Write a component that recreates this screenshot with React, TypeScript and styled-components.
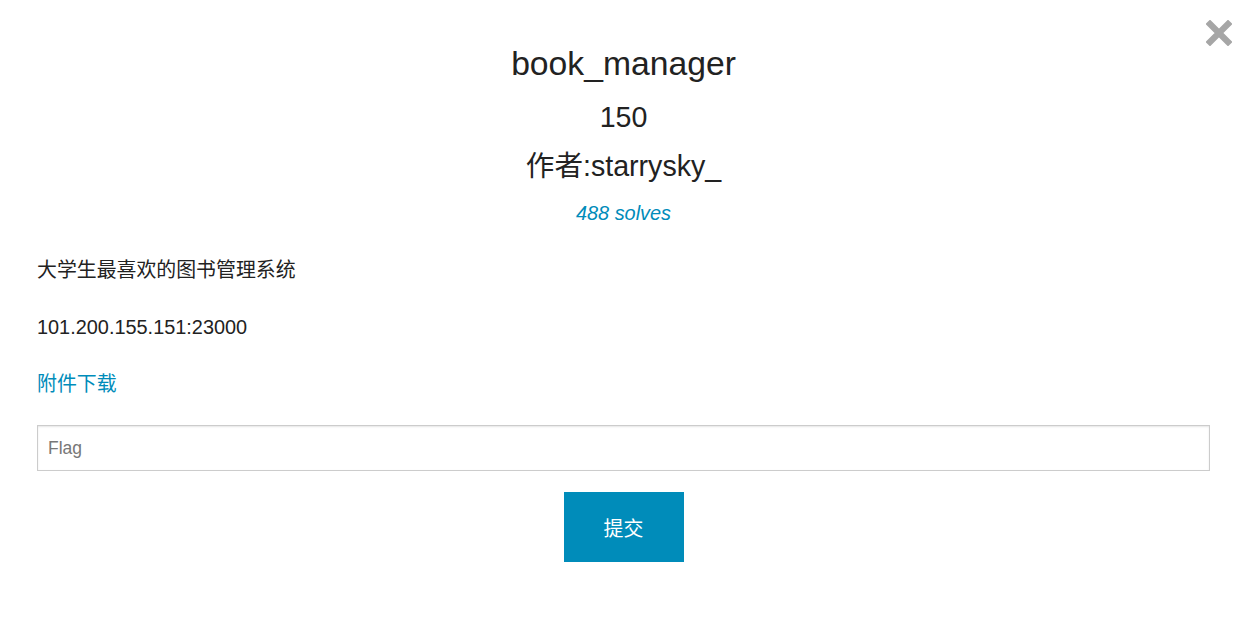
import React from "react";
import styled, { createGlobalStyle } from "styled-components";

const Global = createGlobalStyle`
  html, body { margin: 0; padding: 0; background: #fff; }
  body { font-family: "Liberation Sans", Arial, "Noto Sans CJK SC", sans-serif; color: #222; }
  * { box-sizing: border-box; }
`;

const Modal = styled.div`
  position: relative;
  width: 1246px;
  height: 622px;
  padding: 43px 36px 0 37px;
  display: flex;
  flex-direction: column;
  background: #fff;
`;

const Close = styled.button`
  position: absolute;
  top: 19px;
  right: 13px;
  width: 28px;
  height: 28px;
  padding: 0;
  border: 0;
  background: none;
  cursor: pointer;
  display: flex;
  align-items: center;
  justify-content: center;
`;

const Header = styled.div`
  display: flex;
  flex-direction: column;
  align-items: center;
  text-align: center;
`;

const Title = styled.h2`
  margin: 0;
  font-weight: 400;
  font-size: 33.7px;
  line-height: 40px;
  color: #222;
`;

const Sub = styled.h3<{ $mt: number }>`
  margin: ${(p) => p.$mt}px 0 0;
  font-weight: 400;
  font-size: 28.6px;
  line-height: 36px;
  color: #222;
`;

const Solves = styled.a`
  margin-top: 17px;
  font-style: italic;
  font-size: 19.9px;
  line-height: 24px;
  color: #008cba;
  text-decoration: none;
`;

const Para = styled.p<{ $mt: number }>`
  margin: ${(p) => p.$mt}px 0 0;
  font-size: 19.9px;
  line-height: 28px;
  color: #222;
`;

const Link = styled.a`
  color: #008cba;
  text-decoration: none;
`;

const Input = styled.input`
  margin-top: 27px;
  width: 100%;
  height: 46px;
  padding: 0 10px;
  border: 1px solid #ccc;
  box-shadow: inset 0 1px 2px rgba(0, 0, 0, 0.1);
  font-family: "Liberation Sans", Arial, sans-serif;
  font-size: 17.5px;
  color: #333;
  outline: none;
  &::placeholder { color: #777; }
`;

const Actions = styled.div`
  margin-top: 21px;
  display: flex;
  justify-content: center;
`;

const Submit = styled.button`
  width: 120px;
  height: 70px;
  border: 0;
  background: #008cba;
  color: #fff;
  font-family: "Liberation Sans", Arial, "Noto Sans CJK SC", sans-serif;
  font-size: 19.9px;
  cursor: pointer;
`;

export default function App() {
  return (
    <>
      <Global />
      <Modal>
        <Close aria-label="close">
          <svg width="26" height="26" viewBox="0 0 26 26">
            <path d="M4 4 L22 22 M22 4 L4 22" stroke="#a6a6a6" strokeWidth="6.2" strokeLinecap="square" />
          </svg>
        </Close>
        <Header>
          <Title>book_manager</Title>
          <Sub $mt={16}>150</Sub>
          <Sub $mt={13}>作者:starrysky_</Sub>
          <Solves href="#">488 solves</Solves>
        </Header>
        <Para $mt={31}>大学生最喜欢的图书管理系统</Para>
        <Para $mt={29}>101.200.155.151:23000</Para>
        <Para $mt={29}><Link href="#">附件下载</Link></Para>
        <Input placeholder="Flag" />
        <Actions>
          <Submit>提交</Submit>
        </Actions>
      </Modal>
    </>
  );
}
